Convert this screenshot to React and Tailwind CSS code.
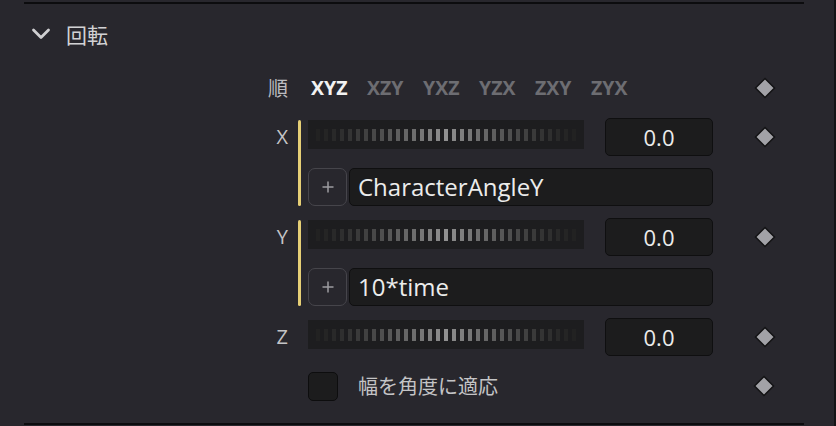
import React from "react";

const latin = { fontFamily: '"Open Sans", "Noto Sans", sans-serif' };
const jp = { fontFamily: '"Noto Sans CJK JP", "Noto Sans", sans-serif' };

// brightness of each jog-wheel tick, brightest in the middle
const TICKS = Array.from({ length: 33 }, (_, i) => {
  const d = Math.abs(i - 16) / 16;
  const v = Math.round(34 + (145 - 34) * Math.pow(1 - d, 1.3));
  return `rgb(${v},${v},${v})`;
});

function Diamond() {
  return (
    <svg width="22" height="22" viewBox="0 0 22 22" className="shrink-0">
      <polygon
        points="11,1.5 20.5,11 11,20.5 1.5,11"
        fill="#a2a2a7"
        stroke="#121214"
        strokeWidth="1.5"
      />
    </svg>
  );
}

function Jog() {
  return (
    <div className="mt-[2px] w-[276px] h-[29px] bg-[#1d1d1f] flex items-center pl-[8px] gap-[4px]">
      {TICKS.map((c, i) => (
        <div key={i} className="w-[4px] h-[12px] shrink-0" style={{ background: c }} />
      ))}
    </div>
  );
}

function ValueBox() {
  return (
    <div
      className="ml-[21px] w-[108px] h-[38px] rounded-[5px] bg-[#1c1c1d] border border-[#0f0f10] flex items-center justify-center text-[22px] text-[#ececec]"
      style={latin}
    >
      0.0
    </div>
  );
}

function SliderRow() {
  return (
    <div className="flex items-start h-[38px]">
      <Jog />
      <ValueBox />
      <div className="ml-[41px] self-center">
        <Diamond />
      </div>
    </div>
  );
}

function ExprRow({ text }) {
  return (
    <div className="flex h-[38px]">
      <div className="w-[39px] h-[38px] rounded-[7px] border-[1.5px] border-[#46454b] flex items-center justify-center">
        <svg width="14" height="14" viewBox="0 0 14 14">
          <path d="M7 1.5v11M1.5 7h11" stroke="#9c9ca0" strokeWidth="1.5" />
        </svg>
      </div>
      <div
        className="ml-[2px] w-[364px] h-[38px] rounded-[5px] bg-[#1c1c1d] border border-[#0f0f10] flex items-center pl-[8px] text-[24px] text-[#ececec]"
        style={latin}
      >
        {text}
      </div>
    </div>
  );
}

function Label({ children }) {
  return (
    <div
      className="w-[38px] h-[38px] flex items-center justify-end text-[20px] text-[#c4c4c6]"
      style={latin}
    >
      {children}
    </div>
  );
}

function Axis({ label, expr }) {
  return (
    <div className="flex items-start ml-[250px]">
      <Label>{label}</Label>
      <div
        className={
          expr
            ? "ml-[10px] mt-[2px] w-[3px] h-[86px] rounded-full bg-[#e6cf76]"
            : "ml-[10px] w-[3px]"
        }
      />
      <div className="ml-[7px] flex flex-col gap-[12px]">
        <SliderRow />
        {expr && <ExprRow text={expr} />}
      </div>
    </div>
  );
}

const ORDERS = ["XYZ", "XZY", "YXZ", "YZX", "ZXY", "ZYX"];

export default function App() {
  return (
    <div className="w-[836px] h-[426px] bg-[#28272d] border-r-2 border-[#141416] flex flex-col overflow-hidden">
      <div className="ml-[24px] mt-[2px] w-[780px] h-[2px] bg-[#0c0c0e]" />

      {/* section header */}
      <div className="flex items-center h-[22px] mt-[19px] ml-[30px]">
        <svg width="22" height="14" viewBox="0 0 22 14">
          <polyline
            points="3.5,3 11,10.5 18.5,3"
            fill="none"
            stroke="#cfcfd1"
            strokeWidth="2.8"
            strokeLinecap="round"
            strokeLinejoin="round"
          />
        </svg>
        <span className="ml-[14px] text-[21px] leading-none text-[#d2d2d4]" style={jp}>
          回転
        </span>
      </div>

      {/* rotation order */}
      <div className="flex ml-[250px] mt-[24px] h-[38px] items-center">
        <div className="w-[38px] flex justify-end text-[20px] text-[#bdbdc0]" style={jp}>
          順
        </div>
        <div className="ml-[23px] flex">
          {ORDERS.map((o, i) => (
            <div
              key={o}
              className={
                i === 0
                  ? "w-[56px] text-[19.5px] font-bold text-[#f2f2f2]"
                  : "w-[56px] text-[19.5px] font-bold text-[#6d6d72]"
              }
              style={latin}
            >
              {o}
            </div>
          ))}
        </div>
        <div className="ml-[107px]">
          <Diamond />
        </div>
      </div>

      <div className="mt-[11px] flex flex-col gap-[12px]">
        <Axis label="X" expr="CharacterAngleY" />
        <Axis label="Y" expr="10*time" />
        <Axis label="Z" />
      </div>

      {/* checkbox row */}
      <div className="flex items-center ml-[308px] mt-[15px] h-[30px]">
        <div className="w-[30px] h-[29px] rounded-[5px] bg-[#1c1c1d] border border-[#0d0d0e]" />
        <span className="ml-[20px] text-[20px] text-[#c4c4c6]" style={jp}>
          幅を角度に適応
        </span>
        <div className="ml-[255px]">
          <Diamond />
        </div>
      </div>

      <div className="ml-[24px] mt-[22px] w-[780px] h-[2px] bg-[#0c0c0e]" />
    </div>
  );
}
